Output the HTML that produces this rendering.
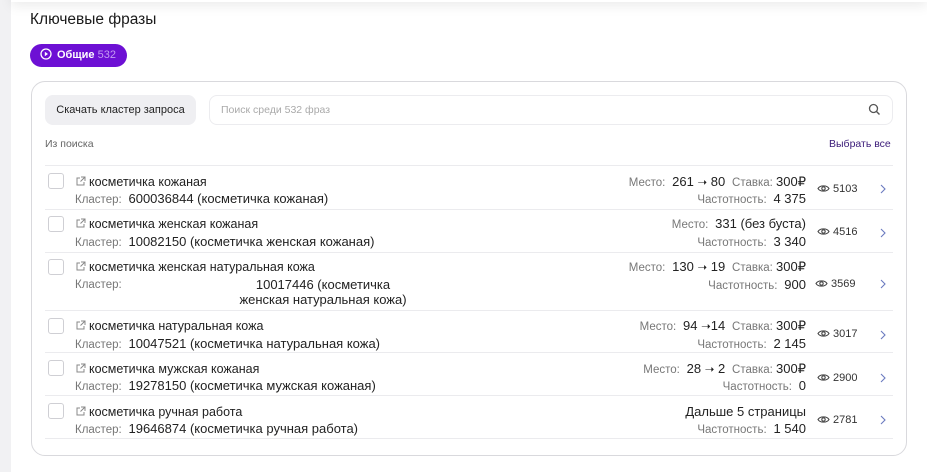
<!DOCTYPE html>
<html><head><meta charset="utf-8"><style>
*{margin:0;padding:0;box-sizing:border-box}
body{width:927px;height:472px;background:#fff;font-family:"Liberation Sans",sans-serif;position:relative;overflow:hidden;color:#222}
.a{position:absolute;white-space:nowrap}
.strip{left:0;top:0;width:11px;height:472px;background:#f1f1f3}
.shadow{left:11px;top:-20px;width:916px;height:22px;box-shadow:0 4px 12px rgba(0,0,0,.08);background:#fff}
.box{left:31px;top:81px;width:876px;height:375px;border:1px solid #d9d9dd;border-radius:14px}
.sep{left:45px;width:848px;height:1px;background:#ebebee}
.cb{width:16px;height:16px;border:1px solid #cfcfd4;border-radius:3px;background:#fff}
.nm{font-size:12.5px;color:#222;line-height:14px}
.lb{font-size:11.5px;color:#777;line-height:14px}
.v{font-size:13px;color:#222}
.r{text-align:right}
.cnt{font-size:11px;color:#333;line-height:14px}
.ext{display:inline-block;vertical-align:-1px;margin-right:3px}
</style></head><body>
<div class="a strip"></div>
<div class="a shadow"></div>
<div class="a" style="left:30px;top:11px;font-size:15.5px;color:#1a1a1a">Ключевые фразы</div>
<div class="a" style="left:30px;top:44px;width:97px;height:23px;border-radius:12px;background:#6d10d4;color:#fff;font-size:11px;font-weight:bold;line-height:23px;padding-left:10px">
<svg width="12" height="12" viewBox="0 0 12 12" style="vertical-align:-2px;margin-right:5px"><circle cx="6" cy="6" r="5" fill="none" stroke="#fff" stroke-width="1.3"/><path d="M4.8 3.8L8 6L4.8 8.2Z" fill="#fff"/></svg>Общие&nbsp;<span style="color:#c49cf2;font-weight:normal">532</span></div>
<div class="a box"></div>
<div class="a" style="left:45px;top:95px;width:151px;height:30px;border-radius:8px;background:#efeff2;font-size:11px;line-height:30px;text-align:center;color:#222">Скачать кластер запроса</div>
<div class="a" style="left:209px;top:95px;width:684px;height:30px;border-radius:8px;border:1px solid #ececef;font-size:10.5px;line-height:28px;padding-left:11px;color:#aaa">Поиск среди 532 фраз</div>
<svg class="a" style="left:868px;top:103px" width="13" height="13" viewBox="0 0 13 13"><circle cx="5.5" cy="5.5" r="4" fill="none" stroke="#555" stroke-width="1.3"/><path d="M8.5 8.5L11.5 11.5" stroke="#555" stroke-width="1.4"/></svg>
<div class="a" style="left:45px;top:138px;font-size:10.5px;color:#666">Из поиска</div>
<div class="a" style="left:829px;top:138px;font-size:10.5px;color:#3a1a78">Выбрать все</div>

<div class="a sep" style="top:165px"></div>
<div class="a sep" style="top:209px"></div>
<div class="a sep" style="top:252px"></div>
<div class="a sep" style="top:310px"></div>
<div class="a sep" style="top:352px"></div>
<div class="a sep" style="top:395px"></div>
<div class="a sep" style="top:438px"></div>

<!-- Row 1 -->
<div class="a cb" style="left:48px;top:173px"></div>
<div class="a nm" style="left:75px;top:175px"><svg class="ext" width="11" height="11" viewBox="0 0 11 11"><path d="M5 2H2V9H9V6" fill="none" stroke="#888" stroke-width="1"/><path d="M6 1H10V5M10 1L5.5 5.5" fill="none" stroke="#888" stroke-width="1"/></svg>косметичка кожаная</div>
<div class="a lb" style="left:75px;top:192px">Кластер: <span class="v">&nbsp;600036844 (косметичка кожаная)</span></div>
<div class="a lb r" style="right:121px;top:175px">Место: <span class="v">&nbsp;261 </span><span style="color:#222">➝</span><span class="v"> 80 </span>&nbsp;Ставка: <span class="v">300₽</span></div>
<div class="a lb r" style="right:121px;top:192px">Частотность: <span class="v">&nbsp;4 375</span></div>

<!-- Row 2 -->
<div class="a cb" style="left:48px;top:216px"></div>
<div class="a nm" style="left:75px;top:217px"><svg class="ext" width="11" height="11" viewBox="0 0 11 11"><path d="M5 2H2V9H9V6" fill="none" stroke="#888" stroke-width="1"/><path d="M6 1H10V5M10 1L5.5 5.5" fill="none" stroke="#888" stroke-width="1"/></svg>косметичка женская кожаная</div>
<div class="a lb" style="left:75px;top:235px">Кластер: <span class="v">&nbsp;10082150 (косметичка женская кожаная)</span></div>
<div class="a lb r" style="right:121px;top:217px">Место: <span class="v">&nbsp;331 (без буста)</span></div>
<div class="a lb r" style="right:121px;top:235px">Частотность: <span class="v">&nbsp;3 340</span></div>

<!-- Row 3 -->
<div class="a cb" style="left:48px;top:259px"></div>
<div class="a nm" style="left:75px;top:260px"><svg class="ext" width="11" height="11" viewBox="0 0 11 11"><path d="M5 2H2V9H9V6" fill="none" stroke="#888" stroke-width="1"/><path d="M6 1H10V5M10 1L5.5 5.5" fill="none" stroke="#888" stroke-width="1"/></svg>косметичка женская натуральная кожа</div>
<div class="a lb" style="left:75px;top:278px">Кластер:</div>
<div class="a v" style="left:230px;top:277px;width:186px;text-align:center;white-space:normal;line-height:15px">10017446 (косметичка женская натуральная кожа)</div>
<div class="a lb r" style="right:121px;top:260px">Место: <span class="v">&nbsp;130 </span><span style="color:#222">➝</span><span class="v"> 19 </span>&nbsp;Ставка: <span class="v">300₽</span></div>
<div class="a lb r" style="right:121px;top:278px">Частотность: <span class="v">&nbsp;900</span></div>

<!-- Row 4 -->
<div class="a cb" style="left:48px;top:318px"></div>
<div class="a nm" style="left:75px;top:319px"><svg class="ext" width="11" height="11" viewBox="0 0 11 11"><path d="M5 2H2V9H9V6" fill="none" stroke="#888" stroke-width="1"/><path d="M6 1H10V5M10 1L5.5 5.5" fill="none" stroke="#888" stroke-width="1"/></svg>косметичка натуральная кожа</div>
<div class="a lb" style="left:75px;top:337px">Кластер: <span class="v">&nbsp;10047521 (косметичка натуральная кожа)</span></div>
<div class="a lb r" style="right:121px;top:319px">Место: <span class="v">&nbsp;94 </span><span style="color:#222">➝</span><span class="v">14 </span>&nbsp;Ставка: <span class="v">300₽</span></div>
<div class="a lb r" style="right:121px;top:337px">Частотность: <span class="v">&nbsp;2 145</span></div>

<!-- Row 5 -->
<div class="a cb" style="left:48px;top:360px"></div>
<div class="a nm" style="left:75px;top:362px"><svg class="ext" width="11" height="11" viewBox="0 0 11 11"><path d="M5 2H2V9H9V6" fill="none" stroke="#888" stroke-width="1"/><path d="M6 1H10V5M10 1L5.5 5.5" fill="none" stroke="#888" stroke-width="1"/></svg>косметичка мужская кожаная</div>
<div class="a lb" style="left:75px;top:379px">Кластер: <span class="v">&nbsp;19278150 (косметичка мужская кожаная)</span></div>
<div class="a lb r" style="right:121px;top:362px">Место: <span class="v">&nbsp;28 </span><span style="color:#222">➝</span><span class="v"> 2 </span>&nbsp;Ставка: <span class="v">300₽</span></div>
<div class="a lb r" style="right:121px;top:379px">Частотность: <span class="v">&nbsp;0</span></div>

<!-- Row 6 -->
<div class="a cb" style="left:48px;top:403px"></div>
<div class="a nm" style="left:75px;top:405px"><svg class="ext" width="11" height="11" viewBox="0 0 11 11"><path d="M5 2H2V9H9V6" fill="none" stroke="#888" stroke-width="1"/><path d="M6 1H10V5M10 1L5.5 5.5" fill="none" stroke="#888" stroke-width="1"/></svg>косметичка ручная работа</div>
<div class="a lb" style="left:75px;top:422px">Кластер: <span class="v">&nbsp;19646874 (косметичка ручная работа)</span></div>
<div class="a v r" style="right:121px;top:404px">Дальше 5 страницы</div>
<div class="a lb r" style="right:121px;top:422px">Частотность: <span class="v">&nbsp;1 540</span></div>

<div class="a cnt" style="left:817px;top:182px"><svg width="13" height="9" viewBox="0 0 13 9" style="vertical-align:-1px"><path d="M1 4.5C3 1 10 1 12 4.5C10 8 3 8 1 4.5Z" fill="none" stroke="#444" stroke-width="1.1"/><circle cx="6.5" cy="4.5" r="1.7" fill="none" stroke="#444" stroke-width="1.1"/></svg> 5103</div>
<div class="a cnt" style="left:817px;top:225px"><svg width="13" height="9" viewBox="0 0 13 9" style="vertical-align:-1px"><path d="M1 4.5C3 1 10 1 12 4.5C10 8 3 8 1 4.5Z" fill="none" stroke="#444" stroke-width="1.1"/><circle cx="6.5" cy="4.5" r="1.7" fill="none" stroke="#444" stroke-width="1.1"/></svg> 4516</div>
<div class="a cnt" style="left:815px;top:277px"><svg width="13" height="9" viewBox="0 0 13 9" style="vertical-align:-1px"><path d="M1 4.5C3 1 10 1 12 4.5C10 8 3 8 1 4.5Z" fill="none" stroke="#444" stroke-width="1.1"/><circle cx="6.5" cy="4.5" r="1.7" fill="none" stroke="#444" stroke-width="1.1"/></svg> 3569</div>
<div class="a cnt" style="left:817px;top:327px"><svg width="13" height="9" viewBox="0 0 13 9" style="vertical-align:-1px"><path d="M1 4.5C3 1 10 1 12 4.5C10 8 3 8 1 4.5Z" fill="none" stroke="#444" stroke-width="1.1"/><circle cx="6.5" cy="4.5" r="1.7" fill="none" stroke="#444" stroke-width="1.1"/></svg> 3017</div>
<div class="a cnt" style="left:817px;top:371px"><svg width="13" height="9" viewBox="0 0 13 9" style="vertical-align:-1px"><path d="M1 4.5C3 1 10 1 12 4.5C10 8 3 8 1 4.5Z" fill="none" stroke="#444" stroke-width="1.1"/><circle cx="6.5" cy="4.5" r="1.7" fill="none" stroke="#444" stroke-width="1.1"/></svg> 2900</div>
<div class="a cnt" style="left:817px;top:413px"><svg width="13" height="9" viewBox="0 0 13 9" style="vertical-align:-1px"><path d="M1 4.5C3 1 10 1 12 4.5C10 8 3 8 1 4.5Z" fill="none" stroke="#444" stroke-width="1.1"/><circle cx="6.5" cy="4.5" r="1.7" fill="none" stroke="#444" stroke-width="1.1"/></svg> 2781</div>

<svg class="a" style="left:879px;top:183px" width="8" height="12" viewBox="0 0 8 12"><path d="M2 2L6 6L2 10" fill="none" stroke="#6b7bc0" stroke-width="1.1"/></svg>
<svg class="a" style="left:879px;top:227px" width="8" height="12" viewBox="0 0 8 12"><path d="M2 2L6 6L2 10" fill="none" stroke="#6b7bc0" stroke-width="1.1"/></svg>
<svg class="a" style="left:879px;top:278px" width="8" height="12" viewBox="0 0 8 12"><path d="M2 2L6 6L2 10" fill="none" stroke="#6b7bc0" stroke-width="1.1"/></svg>
<svg class="a" style="left:879px;top:329px" width="8" height="12" viewBox="0 0 8 12"><path d="M2 2L6 6L2 10" fill="none" stroke="#6b7bc0" stroke-width="1.1"/></svg>
<svg class="a" style="left:879px;top:372px" width="8" height="12" viewBox="0 0 8 12"><path d="M2 2L6 6L2 10" fill="none" stroke="#6b7bc0" stroke-width="1.1"/></svg>
<svg class="a" style="left:879px;top:414px" width="8" height="12" viewBox="0 0 8 12"><path d="M2 2L6 6L2 10" fill="none" stroke="#6b7bc0" stroke-width="1.1"/></svg>
</body></html>
